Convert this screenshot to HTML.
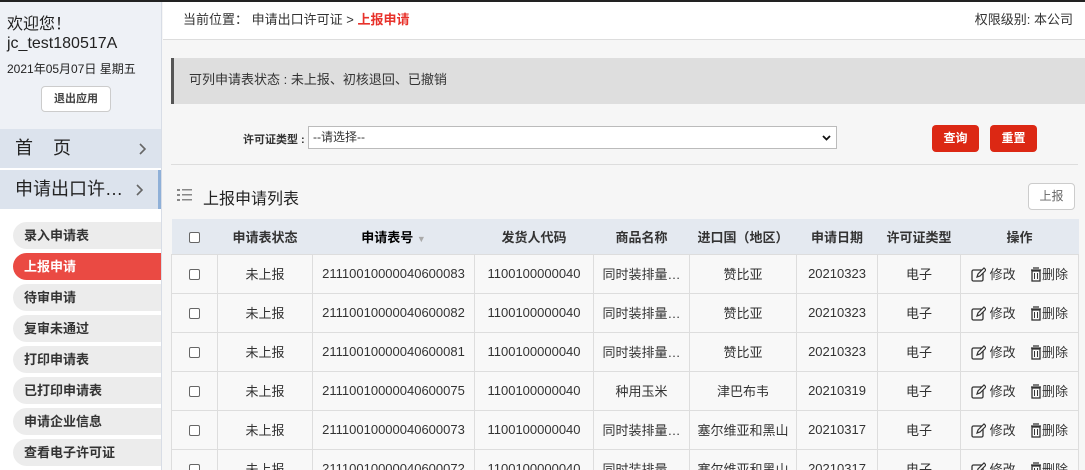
<!DOCTYPE html>
<html><head><meta charset="utf-8"><style>
*{margin:0;padding:0;box-sizing:border-box}
html,body{width:1085px;height:470px;overflow:hidden}
body{font-family:"Liberation Sans","Noto Sans CJK SC",sans-serif;background:#f6f6f6;position:relative;color:#333}
.abs{position:absolute}
#topline{left:0;top:0;width:1085px;height:2px;background:#222}
#side{left:0;top:2px;width:162px;height:468px;background:#fff;border-right:1px solid #d8dde6}
#welcome{left:0;top:0;width:161px;height:127px;background:#eef1f6}
.band{left:0;width:161px;height:39px;background:#dce3ed;font-size:18px;color:#222;line-height:39px;padding-left:15px}
.band svg{position:absolute;right:15px;top:14px}
.pill{left:13px;width:148px;height:27px;background:#ececec;border-radius:14px 0 0 14px;font-size:13px;font-weight:bold;color:#333;line-height:27px;padding-left:11px}
.pill.on{background:#ea4a43;color:#fff}
#topbar{left:163px;top:2px;width:922px;height:38px;background:#fff;border-bottom:1px solid #ddd;font-size:13px;line-height:36px}
table{border-collapse:collapse;position:absolute;left:171px;top:219px;width:907px;font-size:13px;table-layout:fixed}
th{background:#e4e9f0;height:35px;font-weight:bold;color:#333;border:none}
td{height:39px;border:1px solid #ddd;text-align:center;background:#f8f8f8;white-space:nowrap;overflow:hidden;color:#333}
.cb{display:inline-block;width:11px;height:11px;border:1px solid #666;border-radius:2px;background:#fff;vertical-align:middle}
.btn{height:27px;background:#dc2814;color:#fff;border-radius:4px;font-size:12px;font-weight:bold;text-align:center;line-height:27px}
.ops svg{vertical-align:-3px}
</style></head><body>
<div id="topline" class="abs"></div>
<div id="side" class="abs">
 <div id="welcome" class="abs">
  <div class="abs" style="left:7px;top:13px;font-size:16px;color:#222;line-height:19px">欢迎您！<br>jc_test180517A</div>
  <div class="abs" style="left:7px;top:58px;font-size:12px;color:#222">2021年05月07日 星期五</div>
  <div class="abs" style="left:41px;top:84px;width:70px;height:26px;background:#fff;border:1px solid #ccc;border-radius:4px;font-size:11px;font-weight:bold;text-align:center;line-height:24px;color:#444">退出应用</div>
 </div>
 <div class="abs band" style="top:127px">首&nbsp;&nbsp;&nbsp;&nbsp;页<svg width="7" height="12"><path d="M1 1l5 5-5 5" stroke="#666" stroke-width="1.6" fill="none"/></svg></div>
 <div class="abs band" style="top:168px;border-right:3px solid #8fb0d8">申请出口许…<svg width="7" height="12"><path d="M1 1l5 5-5 5" stroke="#666" stroke-width="1.6" fill="none"/></svg></div>
 <div class="abs pill" style="top:220px">录入申请表</div>
 <div class="abs pill on" style="top:251px">上报申请</div>
 <div class="abs pill" style="top:282px">待审申请</div>
 <div class="abs pill" style="top:313px">复审未通过</div>
 <div class="abs pill" style="top:344px">打印申请表</div>
 <div class="abs pill" style="top:375px">已打印申请表</div>
 <div class="abs pill" style="top:406px">申请企业信息</div>
 <div class="abs pill" style="top:437px">查看电子许可证</div>
</div>
<div id="topbar" class="abs"><span style="margin-left:20px">当前位置：&nbsp;申请出口许可证 &gt; <span style="color:#e8322b;font-weight:bold">上报申请</span></span><span style="position:absolute;right:12px">权限级别: 本公司</span></div>
<div class="abs" style="left:171px;top:58px;width:914px;height:46px;background:#dedede;border-left:3px solid #555;font-size:13px;line-height:44px;padding-left:15px">可列申请表状态 : 未上报、初核退回、已撤销</div>
<div class="abs" style="left:243px;top:131px;font-size:11px;font-weight:bold">许可证类型 :</div>
<div class="abs" style="left:308px;top:126px;width:529px;height:23px;background:#fff;border:1px solid #bbb;font-size:12px;line-height:21px;padding-left:4px">--请选择--<svg style="position:absolute;right:5px;top:8px" width="9" height="6"><path d="M1 1l3.5 3.5L8 1" stroke="#111" stroke-width="1.8" fill="none"/></svg></div>
<div class="abs btn" style="left:932px;top:125px;width:47px">查询</div>
<div class="abs btn" style="left:990px;top:125px;width:47px">重置</div>
<div class="abs" style="left:171px;top:164px;width:907px;height:1px;background:#ddd"></div>
<div class="abs" style="left:177px;top:188px;width:15px;height:14px">
 <svg width="15" height="14"><g fill="#888"><rect x="0" y="1" width="3" height="2"/><rect x="0" y="6" width="3" height="2"/><rect x="0" y="11" width="3" height="2"/><rect x="5" y="1" width="10" height="1.5"/><rect x="5" y="6" width="10" height="1.5"/><rect x="5" y="11" width="10" height="1.5"/></g></svg></div>
<div class="abs" style="left:203px;top:185px;font-size:16px;color:#222">上报申请列表</div>
<div class="abs" style="left:1028px;top:183px;width:47px;height:27px;border:1px solid #ccc;border-radius:4px;background:#fff;font-size:12px;color:#666;text-align:center;line-height:25px">上报</div>
<table>
<colgroup><col style="width:46px"><col style="width:95px"><col style="width:162px"><col style="width:119px"><col style="width:96px"><col style="width:107px"><col style="width:81px"><col style="width:83px"><col style="width:118px"></colgroup>
<tr><th><span class="cb"></span></th><th>申请表状态</th><th style="color:#000">申请表号 <span style="color:#aaa;font-size:9px">▼</span></th><th>发货人代码</th><th>商品名称</th><th>进口国（地区）</th><th>申请日期</th><th>许可证类型</th><th>操作</th></tr>
</table>
<script>
var rows=[["21110010000040600083","同时装排量…","赞比亚","20210323"],["21110010000040600082","同时装排量…","赞比亚","20210323"],["21110010000040600081","同时装排量…","赞比亚","20210323"],["21110010000040600075","种用玉米","津巴布韦","20210319"],["21110010000040600073","同时装排量…","塞尔维亚和黑山","20210317"],["21110010000040600072","同时装排量…","塞尔维亚和黑山","20210317"]];
var ed='<svg width="15" height="15"><rect x="1" y="3" width="11" height="11" rx="1.5" fill="none" stroke="#333" stroke-width="1.3"/><path d="M6 10l1-3 6-6 2 2-6 6z" fill="#fff" stroke="#333" stroke-width="1.2"/></svg>';
var tr='<svg width="12" height="15"><path d="M3 1h6M1 3h10" stroke="#333" stroke-width="1.3"/><rect x="2" y="4" width="8" height="10" fill="none" stroke="#333" stroke-width="1.3"/><path d="M4.5 6v6M7.5 6v6" stroke="#333"/></svg>';
var t=document.querySelector('table'),h='';
rows.forEach(function(r){h+='<tr><td><span class="cb"></span></td><td>未上报</td><td>'+r[0]+'</td><td>1100100000040</td><td>'+r[1]+'</td><td>'+r[2]+'</td><td>'+r[3]+'</td><td>电子</td><td class="ops">'+ed+' 修改 &nbsp;&nbsp; '+tr+'删除</td></tr>';});
t.insertAdjacentHTML('beforeend',h);
</script>
</body></html>
